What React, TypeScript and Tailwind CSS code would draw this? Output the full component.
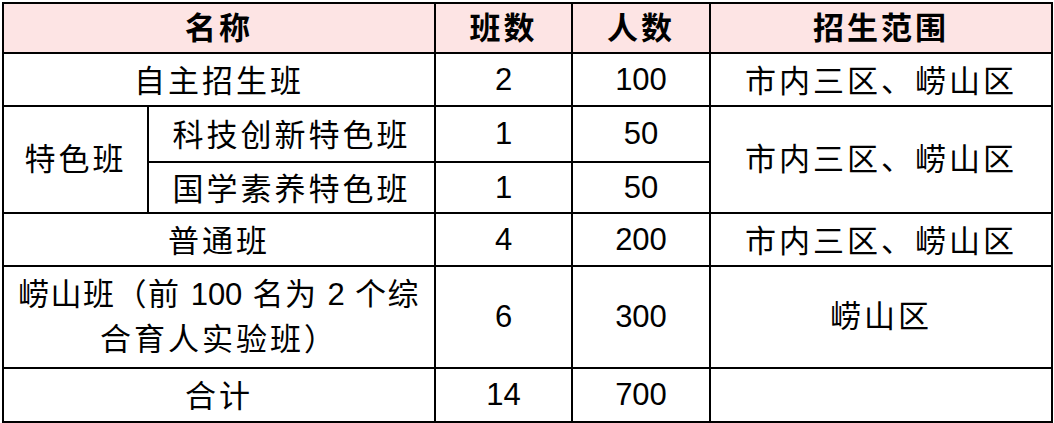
const font = '"Liberation Sans", "Noto Sans CJK SC", sans-serif';

function Num({ children }: { children: React.ReactNode }) {
  return <span className="text-[31px] tracking-normal">{children}</span>;
}

export default function App() {
  const cell = "border-2 border-black text-center align-middle p-0";
  const low = `${cell} pt-[4px]`;

  return (
    <div className="pl-[2px] pt-[2px] bg-white" style={{ fontFamily: font }}>
      <table className="table-fixed border-collapse w-[1051px] text-black text-[31px] leading-[38px] tracking-[3px]">
        <colgroup>
          <col className="w-[145px]" />
          <col className="w-[287px]" />
          <col className="w-[137px]" />
          <col className="w-[138px]" />
          <col className="w-[342px]" />
        </colgroup>
        <tbody>
          <tr className="h-[50px] bg-[#fde4e4] font-bold">
            <td colSpan={2} className={`${cell} pt-[2px]`}>名称</td>
            <td className={`${cell} pt-[2px]`}>班数</td>
            <td className={`${cell} pt-[2px]`}>人数</td>
            <td className={`${cell} pt-[2px]`}>招生范围</td>
          </tr>
          <tr className="h-[53px]">
            <td colSpan={2} className={low}>自主招生班</td>
            <td className={cell}><Num>2</Num></td>
            <td className={cell}><Num>100</Num></td>
            <td className={low}>市内三区、崂山区</td>
          </tr>
          <tr className="h-[56px]">
            <td rowSpan={2} className={cell}>特色班</td>
            <td className={low}>科技创新特色班</td>
            <td className={cell}><Num>1</Num></td>
            <td className={cell}><Num>50</Num></td>
            <td rowSpan={2} className={cell}>市内三区、崂山区</td>
          </tr>
          <tr className="h-[51px]">
            <td className={low}>国学素养特色班</td>
            <td className={cell}><Num>1</Num></td>
            <td className={cell}><Num>50</Num></td>
          </tr>
          <tr className="h-[53px]">
            <td colSpan={2} className={low}>普通班</td>
            <td className={cell}><Num>4</Num></td>
            <td className={cell}><Num>200</Num></td>
            <td className={low}>市内三区、崂山区</td>
          </tr>
          <tr className="h-[102px]">
            <td colSpan={2} className={`${cell} leading-[45px] tracking-[1.5px]`}>
              崂山班（前 <Num>100</Num> 名为 <Num>2</Num> 个综
              <br />
              <span className="tracking-[3px]">合育人实验班）</span>
            </td>
            <td className={cell}><Num>6</Num></td>
            <td className={cell}><Num>300</Num></td>
            <td className={cell}>崂山区</td>
          </tr>
          <tr className="h-[54px]">
            <td colSpan={2} className={low}>合计</td>
            <td className={cell}><Num>14</Num></td>
            <td className={cell}><Num>700</Num></td>
            <td className={cell}></td>
          </tr>
        </tbody>
      </table>
    </div>
  );
}
